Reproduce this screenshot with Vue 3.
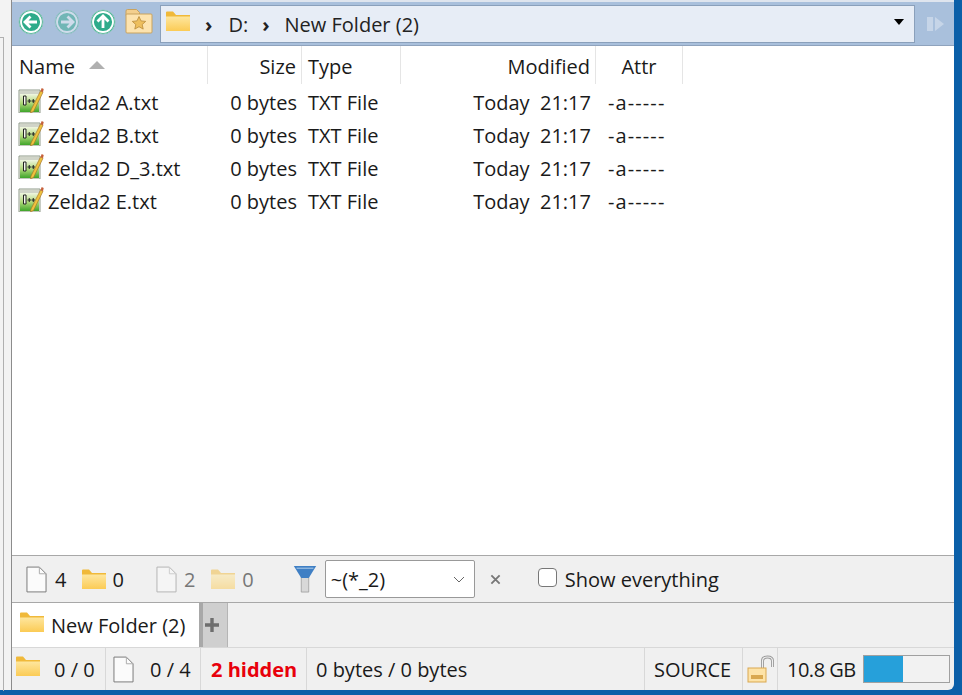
<script setup>
const files = ['Zelda2 A.txt', 'Zelda2 B.txt', 'Zelda2 D_3.txt', 'Zelda2 E.txt']
</script>

<template>
  <div class="window">
    <svg class="defs" width="0" height="0">
      <defs>
        <linearGradient id="fg" x1="0" y1="0" x2="0" y2="1"><stop offset="0" stop-color="#fee9a6"/><stop offset="1" stop-color="#fbcb55"/></linearGradient>
        <linearGradient id="gg" x1="0" y1="0" x2="0" y2="1"><stop offset="0" stop-color="#f0f6e0"/><stop offset=".5" stop-color="#b0d87a"/><stop offset="1" stop-color="#3fa52a"/></linearGradient>
      </defs>
    </svg>
    <div class="side"><div class="side-inner"></div></div>
    <div class="main">
      <div class="toolbar">
        <svg class="nav" viewBox="0 0 26 26"><circle cx="13" cy="13" r="12" fill="#2eab8a" stroke="#8fcab8" stroke-width="1"/><circle cx="13" cy="13" r="10" fill="#2eab8a" stroke="#fff" stroke-width="1.800"/><path d="M7 13h12M12.500 7.500L7 13l5.500 5.500" fill="none" stroke="#fff" stroke-width="2.800"/></svg>
        <svg class="nav dim" viewBox="0 0 26 26"><circle cx="13" cy="13" r="12" fill="#2eab8a" stroke="#8fcab8" stroke-width="1"/><circle cx="13" cy="13" r="10" fill="#2eab8a" stroke="#fff" stroke-width="1.800"/><path d="M19 13H7M13.500 7.500L19 13l-5.500 5.500" fill="none" stroke="#fff" stroke-width="2.800"/></svg>
        <svg class="nav" viewBox="0 0 26 26"><circle cx="13" cy="13" r="12" fill="#2eab8a" stroke="#8fcab8" stroke-width="1"/><circle cx="13" cy="13" r="10" fill="#2eab8a" stroke="#fff" stroke-width="1.800"/><path d="M13 19V7M7.500 12.500L13 7l5.500 5.500" fill="none" stroke="#fff" stroke-width="2.800"/></svg>
        <svg class="fav" viewBox="0 0 28 26"><path d="M1 3q0-1.500 1.500-1.500h9l3 3v3H1z" fill="#f3cf8e" stroke="#c9a35f"/><rect x="1" y="6" width="26" height="19" rx="1" fill="#fde3ae" stroke="#c9a35f"/><path d="M14 8.500l2 4.400 4.700.5-3.500 3.100 1 4.600-4.200-2.400-4.200 2.400 1-4.600-3.500-3.100 4.700-.5z" fill="#eebf5e" stroke="#b98a3a" stroke-width=".8"/></svg>
        <div class="path">
          <svg class="folder" viewBox="0 0 24 20"><path d="M0 4h24v16H0z" fill="url(#fg)"/><path d="M0 1.500q0-1 1-1h6l3 3.500h14v1.500H0z" fill="#f0b93a"/></svg>
          <span class="chev c1">›</span><span>D:</span><span class="chev c2">›</span><span>New Folder (2)</span>
          <span class="drop"></span>
        </div>
        <svg class="go" viewBox="0 0 18 16"><rect x="0" y="1" width="6" height="14" fill="#c6d5e8"/><path d="M8 1l9 7-9 7z" fill="#c6d5e8"/></svg>
      </div>

      <div class="list">
        <div class="head">
          <div class="c name">Name<span class="sort"></span></div>
          <div class="c size">Size</div>
          <div class="c type">Type</div>
          <div class="c mod">Modified</div>
          <div class="c attr">Attr</div>
        </div>
        <div class="rows">
          <div v-for="f in files" :key="f" class="row">
            <div class="c name">
              <svg class="ficon" viewBox="0 0 26 26">
                <path d="M1 3h21v23H1z" fill="#f4f4ec" stroke="#8f9a8a"/>
                <path d="M2 4h19v3H2z" fill="#d0d4c8"/>
                <path d="M2 7h19v18H2z" fill="url(#gg)"/>
                <path d="M5.500 9h2.500v9H5.500z" fill="#f6f9ee" stroke="#222" stroke-width="1"/>
                <path d="M9.500 14h3.500M11.250 12v4M13.500 14h3.500M15.250 12v4" stroke="#222" stroke-width="1" fill="none"/>
                <path d="M13 23L22.500 4l2.500 1.300L15.500 24.500l-3 1.300z" fill="#f0c23e" stroke="#a8782a" stroke-width=".7"/>
                <path d="M22.500 4l1.200-3 2 1-.7 3.300z" fill="#c6603a"/>
              </svg>
              <span>{{ f }}</span>
            </div>
            <div class="c size">0 bytes</div>
            <div class="c type">TXT File</div>
            <div class="c mod">Today&nbsp; 21:17</div>
            <div class="c attr2">-a-----</div>
          </div>
        </div>
      </div>

      <div class="filter">
        <svg class="doc" viewBox="0 0 22 28"><path d="M1 1h13l7 7v19H1z" fill="#fbfbfb" stroke="#777"/><path d="M14 1v7h7" fill="none" stroke="#aaa"/></svg>
        <span class="n n1">4</span>
        <svg class="folder" viewBox="0 0 24 20"><path d="M0 4h24v16H0z" fill="url(#fg)"/><path d="M0 1.500q0-1 1-1h6l3 3.500h14v1.500H0z" fill="#f0b93a"/></svg>
        <span class="n n2">0</span>
        <svg class="doc faint" viewBox="0 0 22 28"><path d="M1 1h13l7 7v19H1z" fill="#fbfbfb" stroke="#777"/><path d="M14 1v7h7" fill="none" stroke="#aaa"/></svg>
        <span class="n n3 grey">2</span>
        <svg class="folder faint2" viewBox="0 0 24 20"><path d="M0 4h24v16H0z" fill="url(#fg)"/><path d="M0 1.500q0-1 1-1h6l3 3.500h14v1.500H0z" fill="#f0b93a"/></svg>
        <span class="n n4 grey">0</span>
        <svg class="funnel" viewBox="0 0 26 30"><path d="M9 12h8v17H9z" fill="#d8d8d8" stroke="#999" stroke-width=".8"/><path d="M1 1h24l-8 13H9z" fill="#3f7fc4"/><path d="M4 3.500h18" stroke="#8fb8e0" stroke-width="1.500"/></svg>
        <div class="combo">
          <span>~(*_2)</span>
          <svg class="cv" viewBox="0 0 12 7"><path d="M1 1l5 5 5-5" fill="none" stroke="#666" stroke-width="1"/></svg>
        </div>
        <svg class="x" viewBox="0 0 12 12"><path d="M1.500 1.500l9 9M10.500 1.500l-9 9" stroke="#777" stroke-width="2"/></svg>
        <span class="check"></span>
        <span>Show everything</span>
      </div>

      <div class="tabs">
        <div class="tab">
          <svg class="folder" viewBox="0 0 24 20"><path d="M0 4h24v16H0z" fill="url(#fg)"/><path d="M0 1.500q0-1 1-1h6l3 3.500h14v1.500H0z" fill="#f0b93a"/></svg>
          <span>New Folder (2)</span>
        </div>
        <div class="add"><svg viewBox="0 0 14 14"><path d="M7 0v14M0 7h14" stroke="#6e6e6e" stroke-width="3.400"/></svg></div>
      </div>

      <div class="status">
        <div class="cell s1">
          <svg class="folder" viewBox="0 0 24 20"><path d="M0 4h24v16H0z" fill="url(#fg)"/><path d="M0 1.500q0-1 1-1h6l3 3.500h14v1.500H0z" fill="#f0b93a"/></svg>
          <span>0 / 0</span>
        </div>
        <div class="cell s2">
          <svg class="doc" viewBox="0 0 22 28"><path d="M1 1h13l7 7v19H1z" fill="#fbfbfb" stroke="#777"/><path d="M14 1v7h7" fill="none" stroke="#aaa"/></svg>
          <span>0 / 4</span>
        </div>
        <div class="cell s3">2 hidden</div>
        <div class="cell s4">0 bytes / 0 bytes</div>
        <div class="cell s5">SOURCE</div>
        <div class="cell s6">
          <svg viewBox="0 0 28 28"><path d="M15.500 13V6q0-4 5-4t5 4v6" fill="none" stroke="#9a9a9a" stroke-width="3"/><path d="M15.500 13V6q0-4 5-4t5 4v6" fill="none" stroke="#efefef" stroke-width="1.200"/><rect x="1" y="13" width="18" height="14" fill="#fde3a8" stroke="#d9a850"/><rect x="4" y="20" width="12" height="4" fill="#d9a850"/></svg>
        </div>
        <div class="cell s7">
          <span class="free">10.8 GB</span>
          <div class="bar"><div class="fill" :style="{ width: '46%' }"></div></div>
        </div>
      </div>
    </div>
    <div class="edge"></div>
  </div>
</template>

<style scoped>
.defs {
  position: absolute;
}
.window {
  width: 962px;
  height: 695px;
  display: flex;
  overflow: hidden;
  position: relative;
  background: #0b5fa8;
  font-family: "Open Sans", "Noto Sans", sans-serif;
  font-size: 20px;
  color: #1a1a1a;
}
.side {
  width: 11px;
  height: 690px;
  background: #f3f3f3;
  padding-top: 37px;
  box-sizing: border-box;
  flex: none;
}
.side-inner {
  width: 3px;
  height: 100%;
  border-right: 1px solid #b0b0b0;
  border-top: 1px solid #b0b0b0;
}
.main {
  width: 943px;
  height: 690px;
  flex: none;
  display: flex;
  flex-direction: column;
  background: #f0f0f0;
  border-left: 1px solid #8c8c8c;
  box-sizing: border-box;
  border-bottom-right-radius: 6px;
  overflow: hidden;
}
.edge {
  flex: 1;
}
.toolbar {
  height: 46px;
  flex: none;
  box-sizing: border-box;
  border-top: 2px solid #dfe5ee;
  border-bottom: 1px solid #8fa3bd;
  background: #a9c0dc;
  display: flex;
  align-items: center;
  padding-left: 6px;
}
.nav {
  width: 26px;
  height: 26px;
  margin-right: 10px;
  margin-top: -3px;
  flex: none;
}
.nav.dim {
  opacity: 0.45;
}
.fav {
  width: 28px;
  height: 26px;
  flex: none;
  margin-left: -1px;
  margin-right: 7px;
  margin-top: -5px;
}
.folder {
  width: 24px;
  height: 20px;
  flex: none;
}
.path {
  width: 755px;
  height: 38px;
  box-sizing: border-box;
  background: #e7edf6;
  border: 1px solid #8aa0bb;
  display: flex;
  align-items: center;
  padding: 2px 0 0 5px;
  position: relative;
  color: #222;
}
.path .folder {
  margin-top: -8px;
}
.chev {
  font-weight: 700;
  font-size: 20px;
}
.c1 {
  margin: 0 16px 0 15px;
}
.c2 {
  margin: 0 15px 0 14px;
}
.drop {
  position: absolute;
  right: 10px;
  top: 13px;
  width: 0;
  height: 0;
  border-left: 5.500px solid transparent;
  border-right: 5.500px solid transparent;
  border-top: 6.500px solid #000;
}
.go {
  width: 18px;
  height: 16px;
  margin-left: 12px;
}
.list {
  flex: 1;
  background: #fff;
  min-height: 0;
}
.head {
  display: flex;
  height: 38px;
  line-height: 42px;
}
.head .c {
  border-right: 1px solid #e5e5e5;
}
.head .name {
  padding-top: 3px;
}
.rows {
  padding-top: 2px;
}
.row {
  display: flex;
  height: 33px;
  line-height: 33px;
}
.c {
  box-sizing: border-box;
  white-space: nowrap;
  flex: none;
}
.name {
  width: 196px;
  padding-left: 7px;
  display: flex;
  align-items: center;
}
.size {
  width: 94px;
  text-align: right;
  padding-right: 5px;
}
.type {
  width: 99px;
  padding-left: 6px;
}
.mod {
  width: 195px;
  text-align: right;
  padding-right: 5px;
}
.attr {
  width: 87px;
  text-align: center;
}
.attr2 {
  width: 87px;
  padding-left: 12px;
  letter-spacing: 1.100px;
}
.sort {
  width: 0;
  height: 0;
  margin-left: 14px;
  margin-bottom: 3px;
  border-left: 8px solid transparent;
  border-right: 8px solid transparent;
  border-bottom: 8px solid #b0b0b0;
}
.row .name {
  gap: 4px;
}
.ficon {
  width: 26px;
  height: 26px;
  flex: none;
  margin-top: -6px;
  margin-left: -1px;
}
.filter {
  height: 48px;
  flex: none;
  box-sizing: border-box;
  border-top: 1px solid #a8a8a8;
  border-bottom: 1px solid #a8a8a8;
  display: flex;
  align-items: center;
  padding-left: 14px;
}
.doc {
  width: 21px;
  height: 27px;
  flex: none;
}
.n1 { margin: 0 16px 0 8px; }
.n2 { margin: 0 32px 0 6px; }
.n3 { margin: 0 16px 0 7px; }
.n4 { margin: 0 38px 0 7px; }
.grey { color: #777; }
.faint { opacity: 0.5; }
.faint2 { opacity: 0.5; }
.funnel {
  width: 26px;
  height: 28px;
  flex: none;
  margin-right: 7px;
}
.combo {
  width: 150px;
  height: 38px;
  box-sizing: border-box;
  background: #fff;
  border: 1px solid #999;
  border-radius: 2px;
  display: flex;
  align-items: center;
  justify-content: space-between;
  padding: 0 9px 0 5px;
}
.cv {
  width: 12px;
  height: 7px;
}
.x {
  width: 11px;
  height: 11px;
  margin: 0 37px 0 15px;
}
.check {
  width: 19px;
  height: 19px;
  box-sizing: border-box;
  background: #fff;
  border: 1px solid #777;
  border-radius: 4px;
  margin-right: 8px;
  margin-top: -3px;
}
.tabs {
  height: 45px;
  flex: none;
  display: flex;
  border-bottom: 1px solid #d8d8d8;
  box-sizing: border-box;
}
.tab {
  width: 191px;
  background: #fff;
  display: flex;
  align-items: center;
  gap: 7px;
  padding-left: 8px;
  box-sizing: border-box;
  border-right: 4px solid #a8a8a8;
}
.tab .folder { margin-top: -6px; }
.add {
  width: 25px;
  background: #cfcfcf;
  border-right: 1px solid #b5b5b5;
  display: flex;
  align-items: center;
  padding-left: 2px;
  box-sizing: border-box;
}
.add svg {
  width: 14px;
  height: 14px;
}
.status {
  flex: none;
  height: 42px;
  display: flex;
  align-items: center;
}
.cell {
  height: 100%;
  box-sizing: border-box;
  display: flex;
  align-items: center;
  border-right: 1px solid #d8d8d8;
  flex: none;
  white-space: nowrap;
}
.s1 { width: 94px; padding-left: 4px; gap: 14px; }
.s1 .folder { margin-top: -6px; }
.s2 { width: 95px; padding-left: 7px; gap: 16px; }
.s3 { width: 106px; padding-left: 10px; color: #e8000b; font-weight: 700; }
.s4 { width: 338px; padding-left: 9px; }
.s5 { width: 98px; padding-left: 9px; }
.s6 { width: 35px; padding-left: 4px; }
.s6 svg { width: 28px; height: 28px; }
.s7 { border-right: 0; padding-left: 9px; gap: 7px; }
.free { letter-spacing: -0.500px; }
.bar {
  width: 87px;
  height: 28px;
  box-sizing: border-box;
  border: 1px solid #a0a0a0;
  background: #f2f2f2;
}
.fill {
  height: 100%;
  background: #26a0da;
}
</style>
